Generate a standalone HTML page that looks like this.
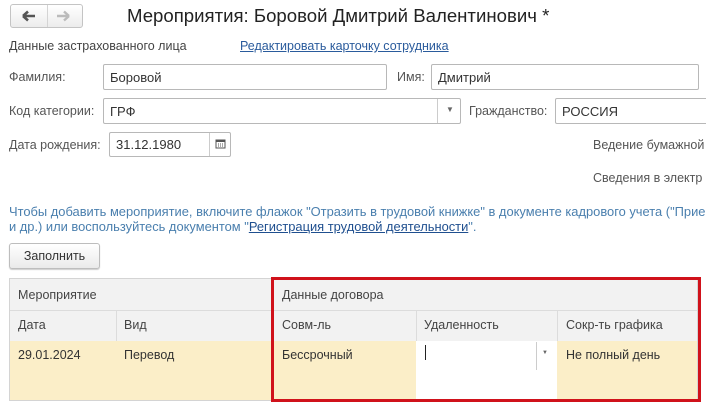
<!DOCTYPE html>
<html><head><meta charset="utf-8"><style>
*{margin:0;padding:0;box-sizing:border-box}
body{width:706px;height:410px;background:#fff;font-family:"Liberation Sans","DejaVu Sans",sans-serif;font-size:12.5px;color:#404040;position:relative;overflow:hidden}
.a{position:absolute;white-space:nowrap}
.inp{position:absolute;border:1px solid #b8b8b8;border-radius:2px;background:#fff;padding-left:6px;color:#333;font-size:13px;display:flex;align-items:center}
.lbl{position:absolute;color:#555;font-size:12.5px;white-space:nowrap}
.tc{position:absolute;font-size:12.5px;color:#444;white-space:nowrap}
</style></head><body>
<div class="a" style="left:10px;top:4px;width:73px;height:24px;border:1px solid #c4c4c4;border-radius:3px;background:linear-gradient(#fff,#ececec)"></div>
<div class="a" style="left:47px;top:5px;width:1px;height:22px;background:#d4d4d4"></div>
<svg class="a" style="left:20px;top:9px" width="18" height="14"><path d="M3 7H15M3 7L8 2.5M3 7L8 11.5" stroke="#555" stroke-width="2.6" fill="none"/></svg>
<svg class="a" style="left:54px;top:9px" width="18" height="14"><path d="M15 7H3M15 7L10 2.5M15 7L10 11.5" stroke="#bbb" stroke-width="2.4" fill="none"/></svg>
<div class="a" style="left:127px;top:5px;font-size:18.6px;color:#222">Мероприятия: Боровой Дмитрий Валентинович *</div>
<div class="lbl" style="left:9px;top:39px;color:#444">Данные застрахованного лица</div>
<div class="lbl" style="left:240px;top:39px;color:#2a5b9c;text-decoration:underline">Редактировать карточку сотрудника</div>
<div class="lbl" style="left:9px;top:70px">Фамилия:</div>
<div class="inp" style="left:103px;top:64px;width:284px;height:26px">Боровой</div>
<div class="lbl" style="left:397px;top:70px">Имя:</div>
<div class="inp" style="left:431px;top:64px;width:268px;height:26px">Дмитрий</div>
<div class="lbl" style="left:9px;top:104px">Код категории:</div>
<div class="inp" style="left:103px;top:98px;width:358px;height:26px">ГРФ</div>
<div class="a" style="left:437px;top:99px;width:1px;height:24px;background:#ccc"></div>
<div class="a" style="left:446px;top:105px;font-size:8px;color:#666">▼</div>
<div class="lbl" style="left:469px;top:104px">Гражданство:</div>
<div class="inp" style="left:555px;top:98px;width:160px;height:26px">РОССИЯ</div>
<div class="lbl" style="left:9px;top:138px">Дата рождения:</div>
<div class="inp" style="left:109px;top:132px;width:122px;height:25px">31.12.1980</div>
<div class="a" style="left:209px;top:133px;width:1px;height:23px;background:#ccc"></div>
<svg class="a" style="left:215px;top:138px" width="11" height="11"><rect x="1" y="2" width="9" height="8" fill="none" stroke="#555"/><rect x="1" y="2" width="9" height="2" fill="#555"/><path d="M3 6h1M5 6h1M7 6h1M3 8h1M5 8h1M7 8h1" stroke="#555"/></svg>
<div class="lbl" style="left:593px;top:138px">Ведение бумажной</div>
<div class="lbl" style="left:593px;top:171px">Сведения в электр</div>
<div class="lbl" style="left:9px;top:204px;color:#4a7fae;font-size:12.9px">Чтобы добавить мероприятие, включите флажок "Отразить в трудовой книжке" в документе кадрового учета ("Прием</div>
<div class="lbl" style="left:9px;top:219px;color:#4a7fae;font-size:12.9px">и др.) или воспользуйтесь документом "<span style="color:#1f4f8f;text-decoration:underline">Регистрация трудовой деятельности</span>".</div>
<div class="a" style="left:9px;top:243px;width:91px;height:26px;border:1px solid #bdbdbd;border-radius:3px;background:linear-gradient(#fff,#eaeaea);box-shadow:0 1px 1px #ccc;text-align:center;line-height:24px;color:#333">Заполнить</div>
<div class="a" style="left:9px;top:278px;width:689px;height:123px;border:1px solid #d4d4d4;background:#fff"></div>
<div class="a" style="left:10px;top:279px;width:687px;height:62px;background:#f2f2f2"></div>
<div class="a" style="left:10px;top:310px;width:687px;height:1px;background:#dcdcdc"></div>
<div class="a" style="left:10px;top:341px;width:687px;height:59px;background:#fbeec8"></div>
<div class="a" style="left:416px;top:341px;width:141px;height:59px;background:#fff"></div>
<div class="a" style="left:116px;top:311px;width:1px;height:30px;background:#dcdcdc"></div>
<div class="a" style="left:416px;top:311px;width:1px;height:30px;background:#dcdcdc"></div>
<div class="a" style="left:557px;top:311px;width:1px;height:30px;background:#dcdcdc"></div>
<div class="a" style="left:271px;top:279px;width:1px;height:62px;background:#dcdcdc"></div>
<div class="tc" style="left:18px;top:288px">Мероприятие</div>
<div class="tc" style="left:282px;top:288px">Данные договора</div>
<div class="tc" style="left:18px;top:318px">Дата</div>
<div class="tc" style="left:124px;top:318px">Вид</div>
<div class="tc" style="left:282px;top:318px">Совм-ль</div>
<div class="tc" style="left:424px;top:318px">Удаленность</div>
<div class="tc" style="left:566px;top:318px">Сокр-ть графика</div>
<div class="tc" style="left:18px;top:348px;color:#333">29.01.2024</div>
<div class="tc" style="left:124px;top:348px;color:#333">Перевод</div>
<div class="tc" style="left:282px;top:348px;color:#333">Бессрочный</div>
<div class="a" style="left:425px;top:345px;width:1px;height:15px;background:#222"></div>
<div class="a" style="left:536px;top:342px;width:1px;height:28px;background:#ccc"></div>
<div class="a" style="left:542px;top:350px;font-size:6px;color:#666">▼</div>
<div class="tc" style="left:566px;top:348px;color:#333">Не полный день</div>
<div class="a" style="left:271px;top:277px;width:430px;height:125px;border:3px solid #d0121b"></div>
</body></html>
